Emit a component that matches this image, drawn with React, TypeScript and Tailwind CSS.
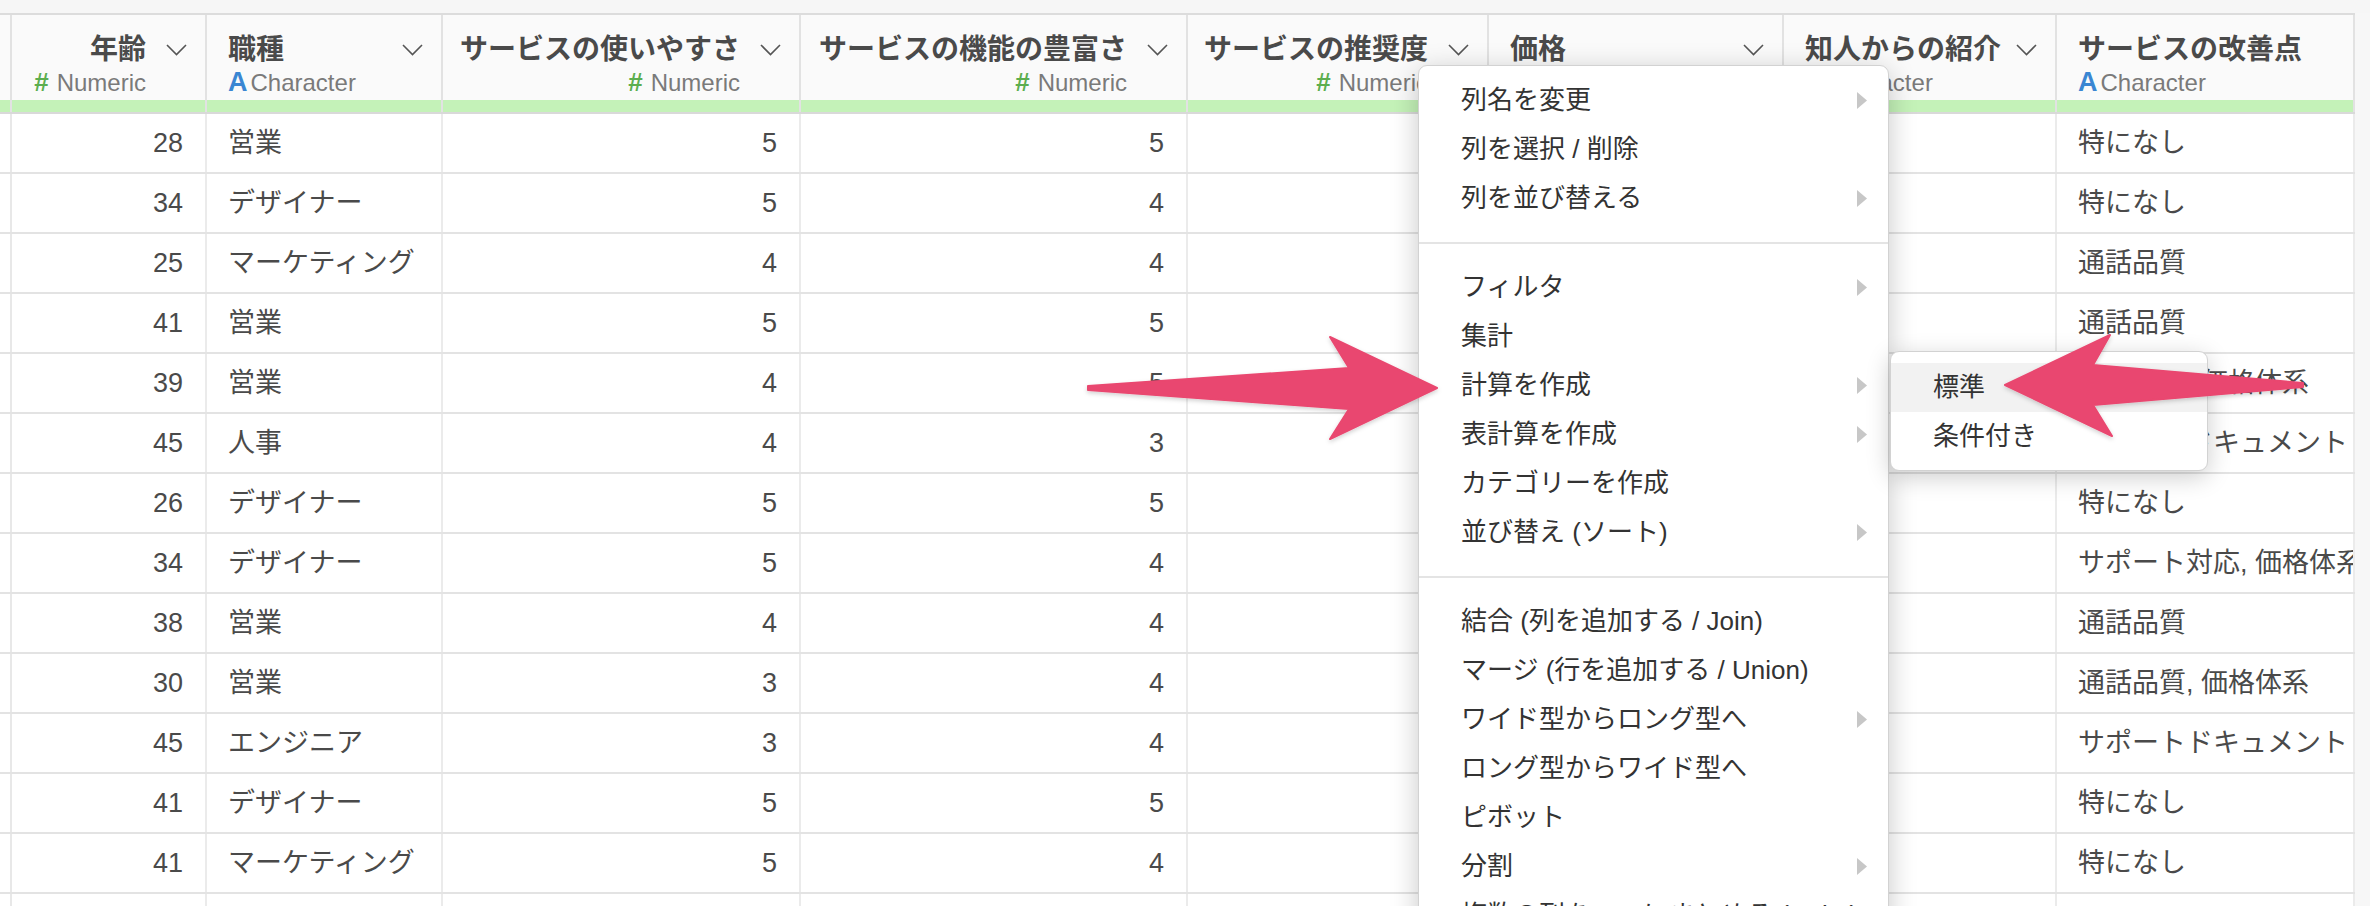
import React from "react";

type Kind = "num" | "chr";
type Col = { title: string; w: string; kind: Kind; chevron: boolean };

const cols: Col[] = [
  { title: "年齢", w: "w-[195px]", kind: "num", chevron: true },
  { title: "職種", w: "w-[236px]", kind: "chr", chevron: true },
  { title: "サービスの使いやすさ", w: "w-[358px]", kind: "num", chevron: true },
  { title: "サービスの機能の豊富さ", w: "w-[387px]", kind: "num", chevron: true },
  { title: "サービスの推奨度", w: "w-[301px]", kind: "num", chevron: true },
  { title: "価格", w: "w-[295px]", kind: "chr", chevron: true },
  { title: "知人からの紹介", w: "w-[273px]", kind: "chr", chevron: true },
  { title: "サービスの改善点", w: "w-[298px]", kind: "chr", chevron: false },
];

const rows: string[][] = [
  ["28", "営業", "5", "5", "4", "5,000", "あり", "特になし"],
  ["34", "デザイナー", "5", "4", "5", "3,000", "なし", "特になし"],
  ["25", "マーケティング", "4", "4", "4", "3,000", "なし", "通話品質"],
  ["41", "営業", "5", "5", "5", "5,000", "あり", "通話品質"],
  ["39", "営業", "4", "5", "4", "3,000", "なし", "通話品質, 価格体系"],
  ["45", "人事", "4", "3", "3", "1,000", "なし", "サポートドキュメント"],
  ["26", "デザイナー", "5", "5", "5", "5,000", "あり", "特になし"],
  ["34", "デザイナー", "5", "4", "4", "3,000", "なし", "サポート対応, 価格体系"],
  ["38", "営業", "4", "4", "4", "3,000", "あり", "通話品質"],
  ["30", "営業", "3", "4", "3", "1,000", "なし", "通話品質, 価格体系"],
  ["45", "エンジニア", "3", "4", "3", "1,000", "なし", "サポートドキュメント"],
  ["41", "デザイナー", "5", "5", "5", "5,000", "あり", "特になし"],
  ["41", "マーケティング", "5", "4", "4", "3,000", "なし", "特になし"],
  ["29", "営業", "4", "4", "4", "3,000", "なし", "特になし"],
];

function Chevron() {
  return (
    <svg width="21" height="12" viewBox="0 0 21 12" className="shrink-0">
      <polyline points="1,1 10.5,10.5 20,1" fill="none" stroke="#555" strokeWidth="1.6" />
    </svg>
  );
}

function TypeLabel({ kind }: { kind: Kind }) {
  if (kind === "num") {
    return (
      <span className="flex items-center text-[24px] text-[#7a7a7a]">
        <span className="font-bold text-[#5cae4f] text-[26px] mr-[8px]">#</span>
        Numeric
      </span>
    );
  }
  return (
    <span className="flex items-center text-[24px] text-[#7a7a7a]">
      <span className="font-bold text-[#3a86d2] text-[27px] mr-[3px]">A</span>
      Character
    </span>
  );
}

function HeaderCell({ col }: { col: Col }) {
  return (
    <div className={`${col.w} shrink-0 border-r-2 border-[#e2e2e2] flex flex-col`}>
      <div className="h-[85px] pl-[21px] pr-[18px] pt-[17px]">
        {col.kind === "num" ? (
          <>
            <div className="h-[35px] flex items-center justify-end gap-[20px]">
              <span className="font-bold text-[28px] text-[#4a4a4a] whitespace-nowrap">{col.title}</span>
              {col.chevron && <Chevron />}
            </div>
            <div className="h-[31px] flex items-center justify-end pr-[41px] whitespace-nowrap">
              <TypeLabel kind={col.kind} />
            </div>
          </>
        ) : (
          <>
            <div className="h-[35px] flex items-center justify-between">
              <span className="font-bold text-[28px] text-[#4a4a4a] whitespace-nowrap">{col.title}</span>
              {col.chevron && <Chevron />}
            </div>
            <div className="h-[31px] flex items-center whitespace-nowrap">
              <TypeLabel kind={col.kind} />
            </div>
          </>
        )}
      </div>
      <div className="h-[12px] bg-[#c4f2b8]" />
    </div>
  );
}

function MenuArrow() {
  return (
    <svg width="10" height="17" viewBox="0 0 10 17" className="shrink-0">
      <polygon points="0,0 10,8.5 0,17" fill="#c7c7c7" />
    </svg>
  );
}

function MenuItem({ label, sub, active }: { label: string; sub?: boolean; active?: boolean }) {
  return (
    <div
      className={`h-[49px] pl-[42px] pr-[21px] flex items-center justify-between text-[26px] text-[#333] whitespace-nowrap ${
        active ? "bg-[#f2f2f2]" : ""
      }`}
    >
      <span>{label}</span>
      {sub && <MenuArrow />}
    </div>
  );
}

function Separator() {
  return <div className="my-[19px] h-[2px] bg-[#e4e4e4]" />;
}

export default function App() {
  return (
    <div className="relative w-[2370px] h-[906px] overflow-hidden bg-[#f7f7f7] font-['Liberation_Sans','Noto_Sans_CJK_JP',sans-serif]">
      <div className="h-[13px] bg-[#f6f6f6]" />
      <div className="w-[2355px] border-t-2 border-[#dcdcdc]">
        {/* header */}
        <div className="flex bg-[#fafafa] border-b-2 border-[#d9d9d9]">
          <div className="w-[12px] shrink-0 border-r-2 border-[#e2e2e2] flex flex-col">
            <div className="h-[85px]" />
            <div className="h-[12px] bg-[#c4f2b8]" />
          </div>
          {cols.map((c) => (
            <HeaderCell key={c.title} col={c} />
          ))}
        </div>
        {/* body */}
        <div className="bg-white">
          {rows.map((r, i) => (
            <div key={i} className="flex h-[60px] border-b-2 border-[#e3e3e3]">
              <div className="w-[12px] shrink-0 border-r-2 border-[#e8e8e8]" />
              {cols.map((c, j) => (
                <div
                  key={j}
                  className={`${c.w} shrink-0 border-r-2 border-[#ebebeb] flex items-center overflow-hidden whitespace-nowrap text-[27px] text-[#4a4a4a] ${
                    c.kind === "num" ? "justify-end pr-[22px]" : "justify-start pl-[21px]"
                  }`}
                >
                  {r[j]}
                </div>
              ))}
            </div>
          ))}
        </div>
      </div>

      {/* context menu */}
      <div className="absolute left-[1418px] top-[65px] w-[471px] rounded-[9px] border border-[#d2d2d2] bg-white py-[10px] shadow-[0_6px_28px_rgba(0,0,0,0.22)]">
        <MenuItem label="列名を変更" sub />
        <MenuItem label="列を選択 / 削除" />
        <MenuItem label="列を並び替える" sub />
        <Separator />
        <MenuItem label="フィルタ" sub />
        <MenuItem label="集計" />
        <MenuItem label="計算を作成" sub />
        <MenuItem label="表計算を作成" sub />
        <MenuItem label="カテゴリーを作成" />
        <MenuItem label="並び替え (ソート)" sub />
        <Separator />
        <MenuItem label="結合 (列を追加する / Join)" />
        <MenuItem label="マージ (行を追加する / Union)" />
        <MenuItem label="ワイド型からロング型へ" sub />
        <MenuItem label="ロング型からワイド型へ" />
        <MenuItem label="ピボット" />
        <MenuItem label="分割" sub />
        <MenuItem label="複数の列を一つにまとめる (Unite)" />
        <MenuItem label="列のデータタイプを変換" sub />
      </div>

      {/* submenu */}
      <div className="absolute left-[1890px] top-[351px] w-[318px] rounded-[9px] border border-[#d2d2d2] bg-white pt-[11px] pb-[9px] shadow-[0_6px_24px_rgba(0,0,0,0.2)]">
        <MenuItem label="標準" active />
        <MenuItem label="条件付き" />
      </div>

      {/* annotation arrows */}
      <svg
        className="absolute left-0 top-0 pointer-events-none"
        width="2370"
        height="906"
        viewBox="0 0 2370 906"
      >
        <defs>
          <filter id="ashadow" x="-10%" y="-30%" width="120%" height="160%">
            <feDropShadow dx="0" dy="2" stdDeviation="2" floodColor="#000" floodOpacity="0.18" />
          </filter>
        </defs>
        <polygon
          points="1088,386 1349,368 1330,337 1437,388 1330,439 1349,409 1088,390"
          fill="#e9476f"
          stroke="#e9476f"
          strokeWidth="2"
          strokeLinejoin="round"
          filter="url(#ashadow)"
        />
        <polygon
          points="2303,383 2093,365 2110,335 2005,385 2112,436 2093,405 2303,387"
          fill="#e9476f"
          stroke="#e9476f"
          strokeWidth="2"
          strokeLinejoin="round"
          filter="url(#ashadow)"
        />
      </svg>
    </div>
  );
}
